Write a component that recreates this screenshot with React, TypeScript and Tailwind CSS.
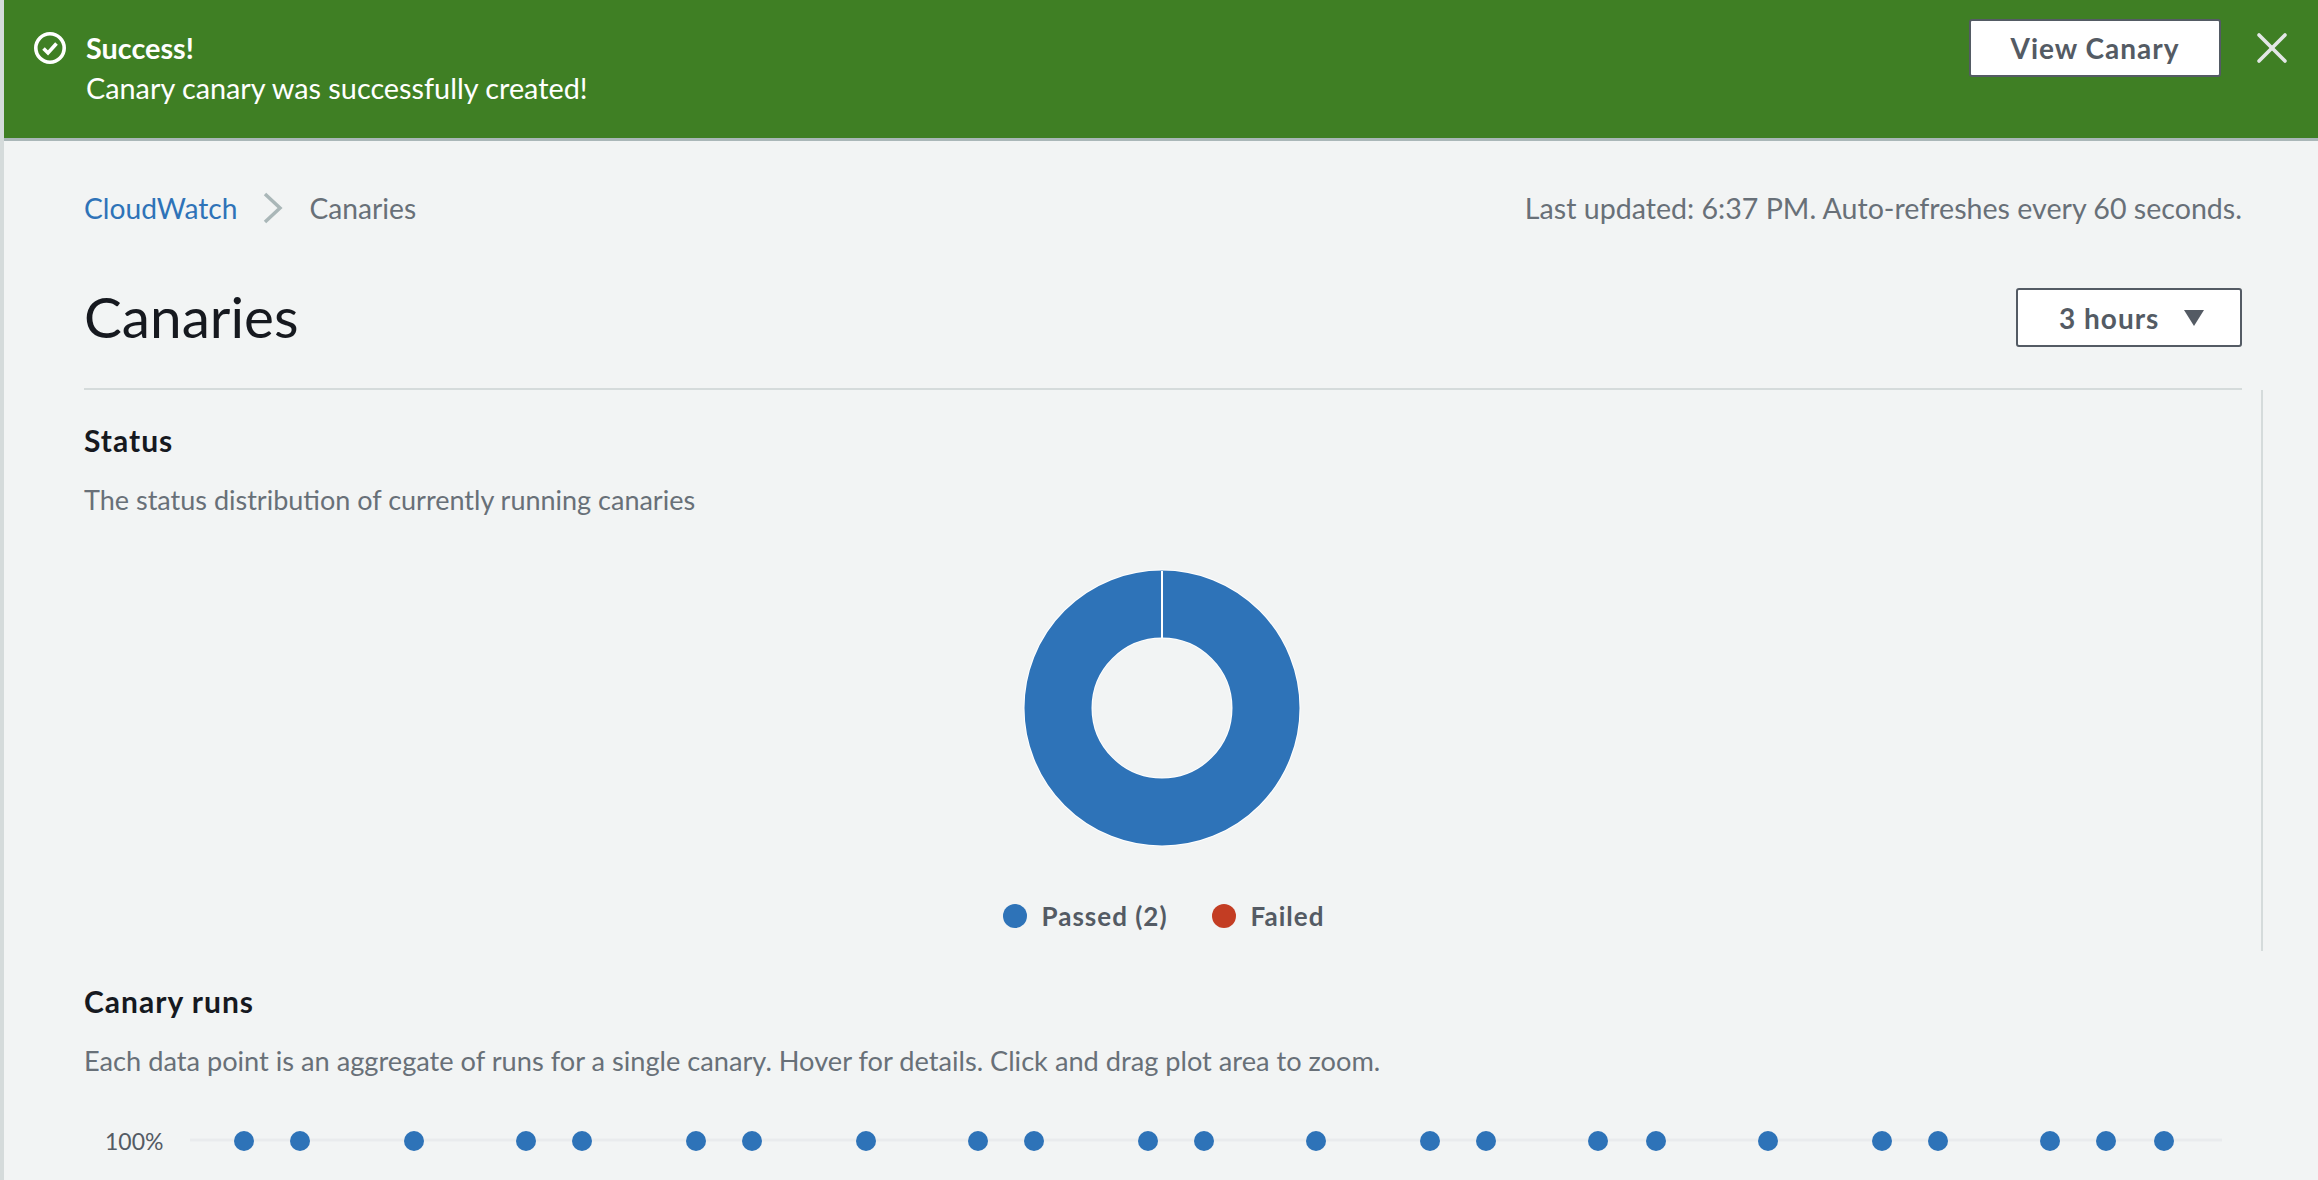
import { X } from "lucide-react";

const dots = [
  244, 300, 414, 526, 582, 696, 752, 866, 978, 1034, 1148, 1204, 1316, 1430, 1486, 1598, 1656, 1768, 1882, 1938, 2050,
  2106, 2164,
];

function CheckCircle() {
  return (
    <svg width="34" height="34" viewBox="0 0 34 34" fill="none" className="shrink-0">
      <circle cx="17" cy="17" r="14.2" stroke="white" strokeWidth="3.6" />
      <path d="M10.5 17.5l4.5 4.5 8.5-9.5" stroke="white" strokeWidth="3.6" />
    </svg>
  );
}

function Donut() {
  return (
    <svg width="280" height="280" viewBox="0 0 280 280" className="block">
      <circle cx="140" cy="140" r="104" fill="none" stroke="#ffffff" strokeWidth="69" />
      <circle cx="140" cy="140" r="104" fill="none" stroke="#2e73b8" strokeWidth="67" />
      <path d="M140 3v67" stroke="#ffffff" strokeWidth="2" />
    </svg>
  );
}

function RunsChart() {
  return (
    <div className="flex items-center">
      <span className="w-[106px] shrink-0 pl-[21px] text-[23px] leading-[40px] text-[#545b64]">100%</span>
      <svg width="2032" height="24" viewBox="190 1128 2032 24" className="block shrink-0">
        <path d="M190 1139h2032" stroke="#e9ebed" strokeWidth="3" />
        {dots.map((x) => (
          <circle key={x} cx={x} cy="1140" r="10" fill="#2e73b8" />
        ))}
      </svg>
    </div>
  );
}

export default function App() {
  return (
    <div className="h-[1180px] w-[2318px] overflow-hidden border-l-[4px] border-[#d5dbdb] bg-[#f2f4f4] font-['Lato','Noto_Sans',sans-serif]">
      {/* Flash banner */}
      <div className="flex h-[141px] border-b-[3px] border-[#aab7b8] bg-[#3f7f24] pl-[29px] pr-[20px] pt-[19px] text-white">
        <div className="mt-[12px] self-start">
          <CheckCircle />
        </div>
        <div className="ml-[19px] flex-1 pt-[9px] text-[28.8px] leading-[40px]">
          <div className="font-bold">Success!</div>
          <div>Canary canary was successfully created!</div>
        </div>
        <button className="h-[58px] w-[252px] rounded-[3px] border-[2px] border-[#545b64] bg-white text-[28px] font-bold tracking-[1px] text-[#545b64]">
          View Canary
        </button>
        <X size={52} strokeWidth={1.7} className="ml-[25px] mt-[3px] text-[#e3e6e6]" />
      </div>

      {/* Page content */}
      <div className="pl-[80px] pr-[76px]">
        <div className="flex items-center justify-between pt-[47px] text-[28.2px] leading-[40px] text-[#687078]">
          <div className="flex items-center">
            <a className="text-[#2e73b8]">CloudWatch</a>
            <svg width="22" height="32" viewBox="0 0 22 32" fill="none" className="mx-[25px]">
              <path d="M3 2l15 14-15 14" stroke="#aab7b8" strokeWidth="3.5" />
            </svg>
            <span>Canaries</span>
          </div>
          <span className="text-[28.6px]">Last updated: 6:37 PM. Auto-refreshes every 60 seconds.</span>
        </div>

        <div className="mt-[55px] flex h-[107px] items-start justify-between border-b-[2px] border-[#d5dbdb]">
          <h1 className="text-[56.7px] leading-[66px] text-[#16191f]">Canaries</h1>
          <button className="mt-[5px] flex h-[59px] w-[226px] items-center rounded-[3px] border-[2px] border-[#545b64] bg-white pl-[41px] text-[28px] font-bold tracking-[1px] text-[#545b64]">
            3 hours
            <svg width="20" height="16" viewBox="0 0 20 16" className="ml-[25px]">
              <path d="M0 0h20L10 16z" fill="#545b64" />
            </svg>
          </button>
        </div>

        <div className="mr-[-21px] h-[561px] border-r-[2px] border-[#d5dbdb] pr-[21px] pt-[30px]">
          <h2 className="text-[30px] font-bold leading-[40px] tracking-[1px] text-[#16191f]">Status</h2>
          <p className="mt-[20px] text-[27px] leading-[40px] text-[#687078]">
            The status distribution of currently running canaries
          </p>
          <div className="mt-[48px] flex justify-center">
            <Donut />
          </div>
          <div className="mt-[50px] flex items-center justify-center pl-[3px] text-[26px] font-bold leading-[36px] text-[#545b64]">
            <span className="h-[24px] w-[24px] rounded-full bg-[#2e73b8]" />
            <span className="ml-[15px] tracking-[1px]">Passed (2)</span>
            <span className="ml-[44px] h-[24px] w-[24px] rounded-full bg-[#c33d23]" />
            <span className="ml-[15px] tracking-[1px]">Failed</span>
          </div>
        </div>

        <h2 className="mt-[30px] text-[30px] font-bold leading-[40px] tracking-[1px] text-[#16191f]">Canary runs</h2>
        <p className="mt-[20px] text-[27.2px] leading-[40px] text-[#687078]">
          Each data point is an aggregate of runs for a single canary. Hover for details. Click and drag plot area to
          zoom.
        </p>
        <div className="mt-[40px]">
          <RunsChart />
        </div>
      </div>
    </div>
  );
}
